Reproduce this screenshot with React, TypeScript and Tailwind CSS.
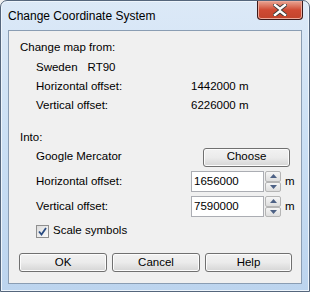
import React from "react";

const font = { fontFamily: '"Liberation Sans", Arial, sans-serif' };

function Spinner() {
  return (
    <div className="flex flex-col h-[21px] w-[16px] ml-[1px]">
      <div className="flex-1 border border-[#b5b5b5] rounded-[2px] bg-gradient-to-b from-[#f6f6f6] to-[#dedede] flex items-center justify-center">
        <svg width="7" height="4" viewBox="0 0 7 4">
          <path d="M0 4 L3.5 0 L7 4 Z" fill="#4d6185" />
        </svg>
      </div>
      <div className="flex-1 border border-[#b5b5b5] rounded-[2px] bg-gradient-to-b from-[#f6f6f6] to-[#dedede] flex items-center justify-center">
        <svg width="7" height="4" viewBox="0 0 7 4">
          <path d="M0 0 L7 0 L3.5 4 Z" fill="#4d6185" />
        </svg>
      </div>
    </div>
  );
}

function NumberField({ value }: { value: string }) {
  return (
    <div className="flex items-center h-[21px]">
      <div className="w-[73px] h-[21px] bg-white border border-[#abadb3] border-t-[#abadb3] flex items-center pl-[2px] text-black">
        {value}
      </div>
      <Spinner />
      <span className="ml-[4px]">m</span>
    </div>
  );
}

function Button({ label, className }: { label: string; className?: string }) {
  return (
    <div
      className={
        "h-[19px] border border-[#707070] rounded-[3px] bg-gradient-to-b from-[#f2f2f2] via-[#ebebeb] to-[#d5d5d5] flex items-center justify-center text-[11.5px] text-black shadow-[inset_0_0_0_1px_#fcfcfc] " +
        (className ?? "")
      }
    >
      {label}
    </div>
  );
}

export default function App() {
  return (
    <div
      className="w-[310px] h-[292px] bg-[#f0f0f0] relative overflow-hidden"
      style={font}
    >
      <div className="w-[310px] h-[292px] rounded-t-[7px] border border-[#55667c] bg-gradient-to-b from-[#dce9f7] via-[#cadff4] to-[#bcd4ee] flex flex-col shadow-[inset_0_0_0_1px_#eef5fc]">
        <div className="h-[29px] flex items-start relative">
          <div className="pl-[7px] pt-[6px] text-[12px] text-black">
            Change Coordinate System
          </div>
          <div className="absolute right-[6px] top-0 w-[46px] h-[19px] rounded-b-[4px] border border-t-0 border-[#3c1a1a] bg-gradient-to-b from-[#e8a493] via-[#cf4a33] to-[#c2442c] flex items-center justify-center shadow-[inset_0_0_0_1px_#eda99a]">
            <svg width="14" height="12" viewBox="0 0 14 12">
              <path
                d="M2 1 L7 5 L12 1 M2 11 L7 7 L12 11"
                stroke="#3a3a3a"
                strokeWidth="4.2"
                fill="none"
                strokeLinecap="square"
              />
              <path
                d="M2 1 L7 5 L12 1 M2 11 L7 7 L12 11"
                stroke="#ffffff"
                strokeWidth="2.4"
                fill="none"
                strokeLinecap="square"
              />
            </svg>
          </div>
        </div>
        <div className="mx-[7px] h-[254px] border border-[#8a9db3] bg-[#f0f0f0] flex flex-col text-[11.5px] text-black pt-[7px]">
          <div className="h-[20px] flex items-center pl-[11px]">Change map from:</div>
          <div className="h-[19px] flex items-center pl-[27px]">
            <span>Sweden</span>
            <span className="ml-[10px]">RT90</span>
          </div>
          <div className="h-[19px] flex items-center pl-[27px]">
            <span className="w-[155px]">Horizontal offset:</span>
            <span>1442000 m</span>
          </div>
          <div className="h-[19px] flex items-center pl-[27px]">
            <span className="w-[155px]">Vertical offset:</span>
            <span>6226000 m</span>
          </div>
          <div className="h-[19px] mt-[13px] flex items-center pl-[11px]">Into:</div>
          <div className="h-[20px] flex items-center pl-[27px]">
            <span className="w-[167px]">Google Mercator</span>
            <Button label="Choose" className="w-[87px] h-[18px] border-[#3c7fb1] from-[#eaf6fd] via-[#d9f0fc] to-[#a7d9f5]" />
          </div>
          <div className="h-[21px] mt-[4px] flex items-center pl-[27px]">
            <span className="w-[155px]">Horizontal offset:</span>
            <NumberField value="1656000" />
          </div>
          <div className="h-[21px] mt-[4px] flex items-center pl-[27px]">
            <span className="w-[155px]">Vertical offset:</span>
            <NumberField value="7590000" />
          </div>
          <div className="h-[14px] mt-[7px] flex items-center pl-[27px]">
            <div className="w-[13px] h-[13px] border border-[#8f8f8f] bg-gradient-to-br from-[#dcdcdc] to-[#fbfbfb] flex items-center justify-center">
              <svg width="9" height="9" viewBox="0 0 9 9">
                <path d="M1 4.5 L3.5 7.5 L8 1" stroke="#2a4c82" strokeWidth="1.8" fill="none" />
              </svg>
            </div>
            <span className="ml-[4px]">Scale symbols</span>
          </div>
          <div className="mt-[15px] flex pl-[10px] gap-[5px]">
            <Button label="OK" className="w-[88px]" />
            <Button label="Cancel" className="w-[88px]" />
            <Button label="Help" className="w-[87px]" />
          </div>
        </div>
      </div>
    </div>
  );
}
